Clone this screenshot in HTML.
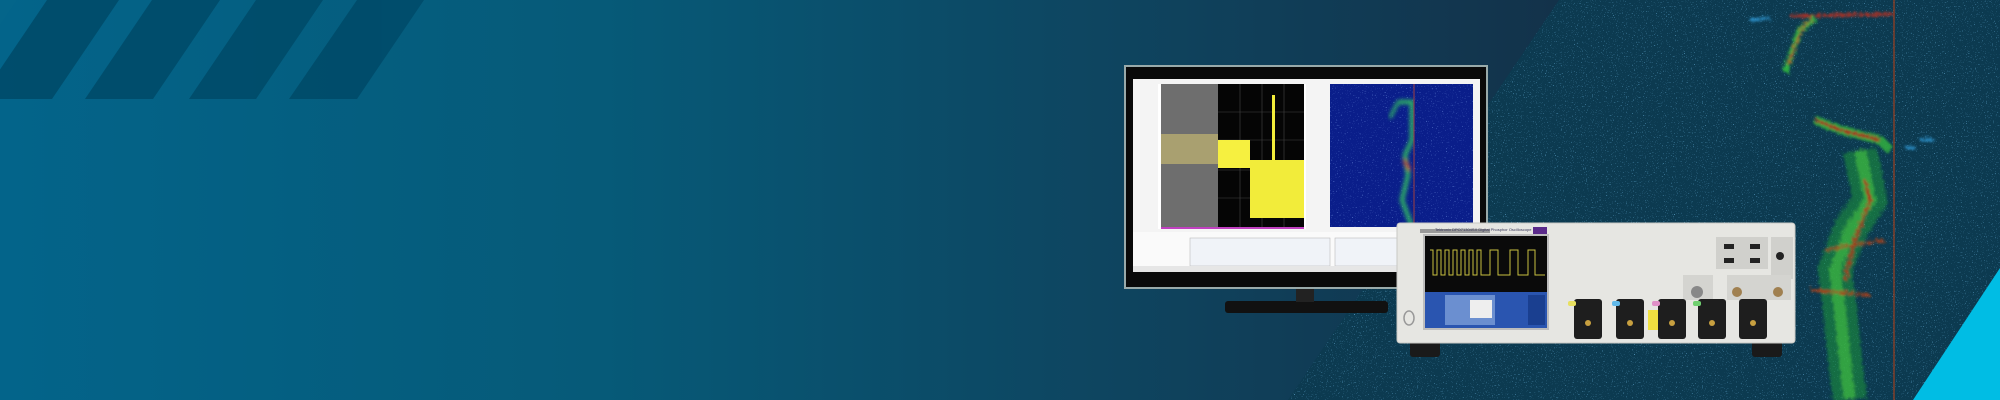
<!DOCTYPE html>
<html><head><meta charset="utf-8"><style>
html,body{margin:0;padding:0;width:2000px;height:400px;overflow:hidden;background:#0b4660}
svg{display:block}
</style></head><body>
<svg width="2000" height="400" viewBox="0 0 2000 400" xmlns="http://www.w3.org/2000/svg">
<defs>
<linearGradient id="bg" x1="0" x2="1" y1="0" y2="0">
<stop offset="0" stop-color="#03648a"/>
<stop offset="0.3" stop-color="#065a78"/>
<stop offset="0.55" stop-color="#0e4560"/>
<stop offset="0.78" stop-color="#13324a"/>
<stop offset="1" stop-color="#142c3c"/>
</linearGradient>
<filter id="noise" x="0" y="0" width="100%" height="100%">
<feTurbulence type="fractalNoise" baseFrequency="0.9" numOctaves="1" seed="3" result="t"/>
<feColorMatrix in="t" type="matrix" values="0 0 0 0 0.2  0 0 0 0 0.6  0 0 0 0 0.95  0 0 0 12 -7.9"/>
</filter>
<filter id="blur1"><feGaussianBlur stdDeviation="2"/></filter>
<filter id="rough" x="-20%" y="-20%" width="140%" height="140%">
<feTurbulence type="fractalNoise" baseFrequency="0.5" numOctaves="1" seed="11" result="t"/>
<feDisplacementMap in="SourceGraphic" in2="t" scale="10"/>
<feGaussianBlur stdDeviation="1"/>
</filter>
<clipPath id="specClip"><polygon points="1559,0 2000,0 2000,400 1288,400"/></clipPath>
<filter id="noise2" x="0" y="0" width="100%" height="100%">
<feTurbulence type="fractalNoise" baseFrequency="0.8" numOctaves="1" seed="7" result="t"/>
<feColorMatrix in="t" type="matrix" values="0 0 0 0 0.3  0 0 0 0 0.5  0 0 0 0 1  0 0 0 7 -4.6"/>
</filter>
</defs>
<rect width="2000" height="400" fill="url(#bg)"/>
<g fill="#004a68" opacity="0.85">
<polygon points="-20,99 52,99 119,0 47,0"/>
<polygon points="85,99 153,99 220,0 152,0"/>
<polygon points="189,99 256,99 323,0 256,0"/>
<polygon points="289,99 357,99 424,0 357,0"/>
</g>
<polygon points="0,99 0,0 17,0 -50,99" fill="#04658a"/>
<polygon points="1559,0 2000,0 2000,400 1288,400" fill="#0c3a50"/>
<g clip-path="url(#specClip)">
<rect x="1280" y="0" width="720" height="400" filter="url(#noise)" opacity="0.55"/>
<line x1="1894" y1="0" x2="1894" y2="400" stroke="#a04020" stroke-width="1.5" opacity="0.8"/>
<g filter="url(#rough)" opacity="0.85">
<path d="M1790,16 L1894,14" stroke="#c03020" stroke-width="3"/>
<path d="M1785,72 L1800,30 L1815,18" stroke="#30c040" stroke-width="6" fill="none"/>
<path d="M1788,65 L1802,28 L1812,19" stroke="#d03020" stroke-width="2" fill="none"/>
<path d="M1815,120 L1840,130 L1880,140 L1890,150" stroke="#30b040" stroke-width="9" fill="none"/>
<path d="M1815,120 L1840,130 L1880,140" stroke="#c02010" stroke-width="3" fill="none"/>
<path d="M1860,150 L1870,200 L1850,230 L1835,270 L1840,310 L1845,360 L1850,400" stroke="#20903a" stroke-width="34" fill="none" opacity="0.7"/>
<path d="M1860,150 L1870,200 L1850,230 L1835,270 L1840,310 L1845,360 L1850,400" stroke="#40c040" stroke-width="12" fill="none" opacity="0.85"/>
<path d="M1865,180 L1870,200 L1855,240 L1845,280" stroke="#c03010" stroke-width="3" fill="none"/>
<path d="M1825,250 L1885,240 M1810,290 L1870,295" stroke="#c04010" stroke-width="2.5"/>
<path d="M1750,20 L1770,18 M1920,140 L1935,140 M1905,148 L1915,148" stroke="#30a0e0" stroke-width="3"/>
</g>
</g>
<polygon points="2000,268 2000,400 1913,400" fill="#00bde4"/>

<rect x="1225" y="301" width="163" height="12" rx="3" fill="#111"/>
<rect x="1296" y="286" width="18" height="16" fill="#222"/>
<rect x="1125" y="66" width="362" height="222" fill="#0a0a0a" stroke="#9aa" stroke-width="2"/>
<rect x="1133" y="79" width="347" height="193" fill="#f4f4f4"/>
<rect x="1158" y="84" width="148" height="145" fill="#fff"/>
<rect x="1161" y="84" width="57" height="143" fill="#6e6e6e"/>
<rect x="1218" y="84" width="86" height="143" fill="#050505"/>
<g stroke="#444" stroke-width="0.6">
<line x1="1218" y1="112" x2="1304" y2="112"/><line x1="1218" y1="140" x2="1304" y2="140"/>
<line x1="1218" y1="170" x2="1304" y2="170"/><line x1="1218" y1="198" x2="1304" y2="198"/>
<line x1="1240" y1="84" x2="1240" y2="227"/><line x1="1262" y1="84" x2="1262" y2="227"/><line x1="1284" y1="84" x2="1284" y2="227"/>
</g>
<rect x="1161" y="134" width="57" height="30" fill="#a9a070"/>
<rect x="1218" y="140" width="32" height="28" fill="#f6f040"/>
<rect x="1250" y="160" width="54" height="58" fill="#f2ec3a"/>
<rect x="1272" y="95" width="3" height="80" fill="#f2ec3a"/>
<rect x="1161" y="227" width="143" height="2" fill="#c040c0"/>
<rect x="1330" y="84" width="143" height="143" fill="#0a1e8a"/>
<rect x="1330" y="84" width="143" height="143" filter="url(#noise2)" opacity="0.6"/>
<g filter="url(#blur1)" fill="none">
<path d="M1398,102 L1412,102 L1412,140 L1405,155 L1408,175 L1402,200 L1412,227" stroke="#30c060" stroke-width="4"/>
<path d="M1390,118 L1398,102" stroke="#30c060" stroke-width="3"/>
<path d="M1404,160 L1410,170" stroke="#e04020" stroke-width="3"/>
</g>
<line x1="1414" y1="84" x2="1414" y2="227" stroke="#a04040" stroke-width="1"/>
<rect x="1133" y="232" width="347" height="40" fill="#fafafa"/>
<rect x="1190" y="238" width="140" height="28" fill="#f0f3f8" stroke="#bbb" stroke-width="0.6"/>
<rect x="1335" y="238" width="140" height="28" fill="#f0f3f8" stroke="#bbb" stroke-width="0.6"/>
<rect x="1133" y="266" width="347" height="6" fill="#e6e6e6"/>

<rect x="1410" y="338" width="30" height="19" rx="3" fill="#1a1a1a"/>
<rect x="1752" y="338" width="30" height="19" rx="3" fill="#1a1a1a"/>
<rect x="1397" y="223" width="398" height="120" rx="3" fill="#e6e6e2" stroke="#c8c8c4"/>
<rect x="1423" y="234" width="126" height="96" fill="#bdbdbd"/>
<rect x="1425" y="236" width="122" height="56" fill="#0a0a0a"/>
<path d="M1430,250 L1433,250 L1433,275 L1437,275 L1437,250 L1441,250 L1441,275 L1445,275 L1445,250 L1449,250 L1449,275 L1453,275 L1453,250 L1457,250 L1457,275 L1461,275 L1461,250 L1465,250 L1465,275 L1469,275 L1469,250 L1473,250 L1473,275 L1477,275 L1477,250 L1481,250 L1481,275 L1490,275 L1490,250 L1498,250 L1498,275 L1510,275 L1510,250 L1518,250 L1518,275 L1528,275 L1528,250 L1535,250 L1535,275 L1545,275" stroke="#c8c040" stroke-width="1" fill="none"/>
<rect x="1425" y="292" width="122" height="36" fill="#2a55b0"/>
<rect x="1445" y="295" width="50" height="30" fill="#6b8fd0"/>
<rect x="1470" y="300" width="22" height="18" fill="#eee"/>
<rect x="1528" y="295" width="17" height="30" fill="#1a3f90"/>
<rect x="1420" y="229" width="70" height="4" fill="#999"/>
<rect x="1533" y="227" width="14" height="7" fill="#5a2a8a"/>
<ellipse cx="1409" cy="318" rx="5" ry="7" fill="none" stroke="#999" stroke-width="1.5"/>
<rect x="1716" y="237" width="52" height="32" fill="#d0d0cc"/>
<rect x="1771" y="237" width="22" height="42" fill="#d0d0cc"/>
<g fill="#222"><rect x="1724" y="244" width="10" height="5"/><rect x="1750" y="244" width="10" height="5"/><rect x="1724" y="258" width="10" height="5"/><rect x="1750" y="258" width="10" height="5"/></g>
<circle cx="1780" cy="256" r="4" fill="#222"/>
<rect x="1683" y="275" width="30" height="25" fill="#d4d4d0"/><circle cx="1697" cy="292" r="6" fill="#888"/>
<rect x="1727" y="275" width="64" height="25" fill="#d4d4d0"/><circle cx="1737" cy="292" r="5" fill="#a08050"/><circle cx="1778" cy="292" r="5" fill="#a08050"/>
<g fill="#1e1e1e">
<rect x="1574" y="299" width="28" height="40" rx="3"/>
<rect x="1616" y="299" width="28" height="40" rx="3"/>
<rect x="1658" y="299" width="28" height="40" rx="3"/>
<rect x="1698" y="299" width="28" height="40" rx="3"/>
<rect x="1739" y="299" width="28" height="40" rx="3"/>
</g>
<g fill="#c8a040"><circle cx="1588" cy="323" r="3"/><circle cx="1630" cy="323" r="3"/><circle cx="1672" cy="323" r="3"/><circle cx="1712" cy="323" r="3"/><circle cx="1753" cy="323" r="3"/></g>
<rect x="1568" y="301" width="8" height="5" rx="2" fill="#e8e060"/>
<rect x="1612" y="301" width="8" height="5" rx="2" fill="#60b8e8"/>
<rect x="1652" y="301" width="8" height="5" rx="2" fill="#e090c8"/>
<rect x="1693" y="301" width="8" height="5" rx="2" fill="#70d070"/>
<rect x="1648" y="310" width="10" height="20" fill="#f0e040"/>
<text x="1435" y="231" font-family="Liberation Sans, sans-serif" font-size="4" fill="#335">Tektronix   DPO71304SX Digital Phosphor Oscilloscope</text>
</svg>
</body></html>
